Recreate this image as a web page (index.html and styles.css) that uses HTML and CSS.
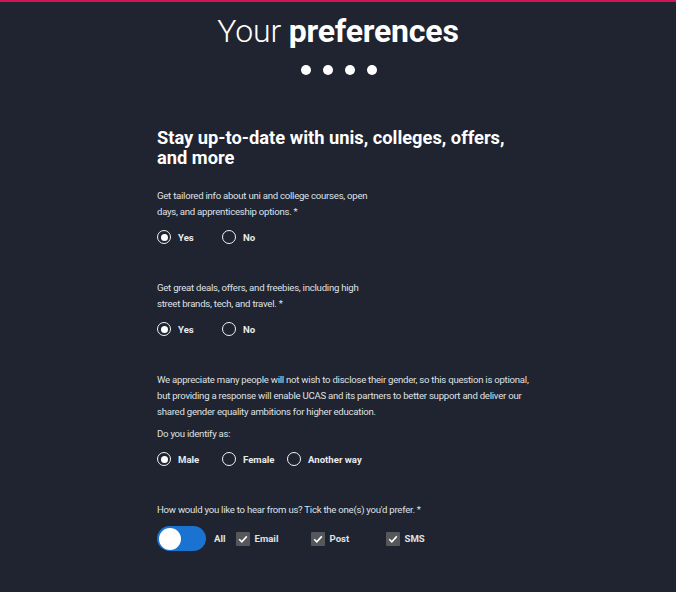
FILE: index.html
```html
<!DOCTYPE html>
<html lang="en">
<head>
  <meta charset="UTF-8" />
  <meta name="viewport" content="width=device-width, initial-scale=1.0"/>
  <title>Your preferences</title>
  <link rel="stylesheet" href="styles.css">
</head>
<body>
  <div class="top-bar"></div>

  <header class="page-header">
    <h1><span class="light">Your</span> preferences</h1>
    <div class="steps">
      <span class="dot"></span>
      <span class="dot"></span>
      <span class="dot"></span>
      <span class="dot"></span>
    </div>
  </header>

  <form class="prefs">
    <h2>Stay up-to-date with unis, colleges, offers, and more</h2>

    <div class="question narrow">
      <p>Get tailored info about uni and college courses, open days, and apprenticeship options. *</p>
      <div class="options">
        <label class="option"><span class="radio checked"></span>Yes</label>
        <label class="option"><span class="radio"></span>No</label>
      </div>
    </div>

    <div class="question narrow">
      <p>Get great deals, offers, and freebies, including high street brands, tech, and travel. *</p>
      <div class="options">
        <label class="option"><span class="radio checked"></span>Yes</label>
        <label class="option"><span class="radio"></span>No</label>
      </div>
    </div>

    <div class="question">
      <p>We appreciate many people will not wish to disclose their gender, so this question is optional, but providing a response will enable UCAS and its partners to better support and deliver our shared gender equality ambitions for higher education.</p>
      <p class="sub">Do you identify as:</p>
      <div class="options">
        <label class="option"><span class="radio checked"></span>Male</label>
        <label class="option"><span class="radio"></span>Female</label>
        <label class="option"><span class="radio"></span>Another way</label>
      </div>
    </div>

    <div class="question">
      <p>How would you like to hear from us? Tick the one(s) you'd prefer. *</p>
      <div class="channels">
        <label class="toggle-wrap"><span class="toggle"><span class="knob"></span></span>All</label>
        <label class="check"><span class="box"><svg viewBox="0 0 14 14" width="14" height="14"><path d="M3.2 7.2l2.6 2.6 5-5.4" fill="none" stroke="#fff" stroke-width="1.6"/></svg></span>Email</label>
        <label class="check"><span class="box"><svg viewBox="0 0 14 14" width="14" height="14"><path d="M3.2 7.2l2.6 2.6 5-5.4" fill="none" stroke="#fff" stroke-width="1.6"/></svg></span>Post</label>
        <label class="check"><span class="box"><svg viewBox="0 0 14 14" width="14" height="14"><path d="M3.2 7.2l2.6 2.6 5-5.4" fill="none" stroke="#fff" stroke-width="1.6"/></svg></span>SMS</label>
      </div>
    </div>
  </form>
</body>
</html>
```

FILE: styles.css
```css
body {
  margin: 0;
  background-color: #1f2430;
  font-family: Roboto, "Liberation Sans", sans-serif;
  color: #dfe1e5;
  height: 592px;
  overflow: hidden;
}

.top-bar {
  height: 2px;
  background: #d4145a;
}

.page-header {
  padding-top: 11px;
  text-align: center;
}

h1 {
  margin: 0;
  font-size: 32px;
  line-height: 37px;
  font-weight: 700;
  color: #fff;
  letter-spacing: -0.2px;
}

h1 .light {
  font-weight: 300;
}

.steps {
  display: flex;
  justify-content: center;
  gap: 12px;
  margin-top: 15px;
  padding-left: 1px;
}

.dot {
  width: 10px;
  height: 10px;
  border-radius: 50%;
  background: #fff;
}

.prefs {
  width: 380px;
  margin-left: 157px;
  margin-top: 53px;
}

h2 {
  margin: 0 0 20px;
  font-size: 18.3px;
  line-height: 20px;
  font-weight: 700;
  color: #fff;
  width: 360px;
}

.question {
  margin-bottom: 35px;
}

.question.narrow p {
  width: 220px;
}

.question p {
  margin: 0;
  font-size: 9.6px;
  line-height: 16px;
  letter-spacing: -0.25px;
}

.question p.sub {
  margin-top: 6px;
}

.options {
  display: flex;
  margin-top: 9px;
  height: 16px;
  align-items: center;
}

.option {
  display: flex;
  align-items: center;
  gap: 7px;
  min-width: 65px;
  font-size: 9.6px;
  font-weight: 700;
  color: #e8e9ec;
}

.radio {
  box-sizing: border-box;
  width: 14px;
  height: 14px;
  border: 1.5px solid #f2f2f2;
  border-radius: 50%;
  display: flex;
  align-items: center;
  justify-content: center;
}

.radio.checked::after {
  content: "";
  width: 7px;
  height: 7px;
  border-radius: 50%;
  background: #fff;
}

.channels {
  display: flex;
  align-items: center;
  margin-top: 8px;
  font-size: 9.6px;
  font-weight: 700;
}

.toggle-wrap {
  display: flex;
  align-items: center;
  gap: 8px;
  margin-right: 10px;
}

.toggle {
  box-sizing: border-box;
  width: 49px;
  height: 25px;
  border-radius: 13px;
  background: #1a73d0;
  padding: 1px 2px;
  display: flex;
  align-items: center;
}

.knob {
  width: 22px;
  height: 22px;
  border-radius: 50%;
  background: #fff;
}

.check {
  display: flex;
  align-items: center;
  gap: 5px;
  width: 75px;
}

.box {
  width: 14px;
  height: 14px;
  background: #55575b;
  border-radius: 1px;
  display: flex;
}
```
